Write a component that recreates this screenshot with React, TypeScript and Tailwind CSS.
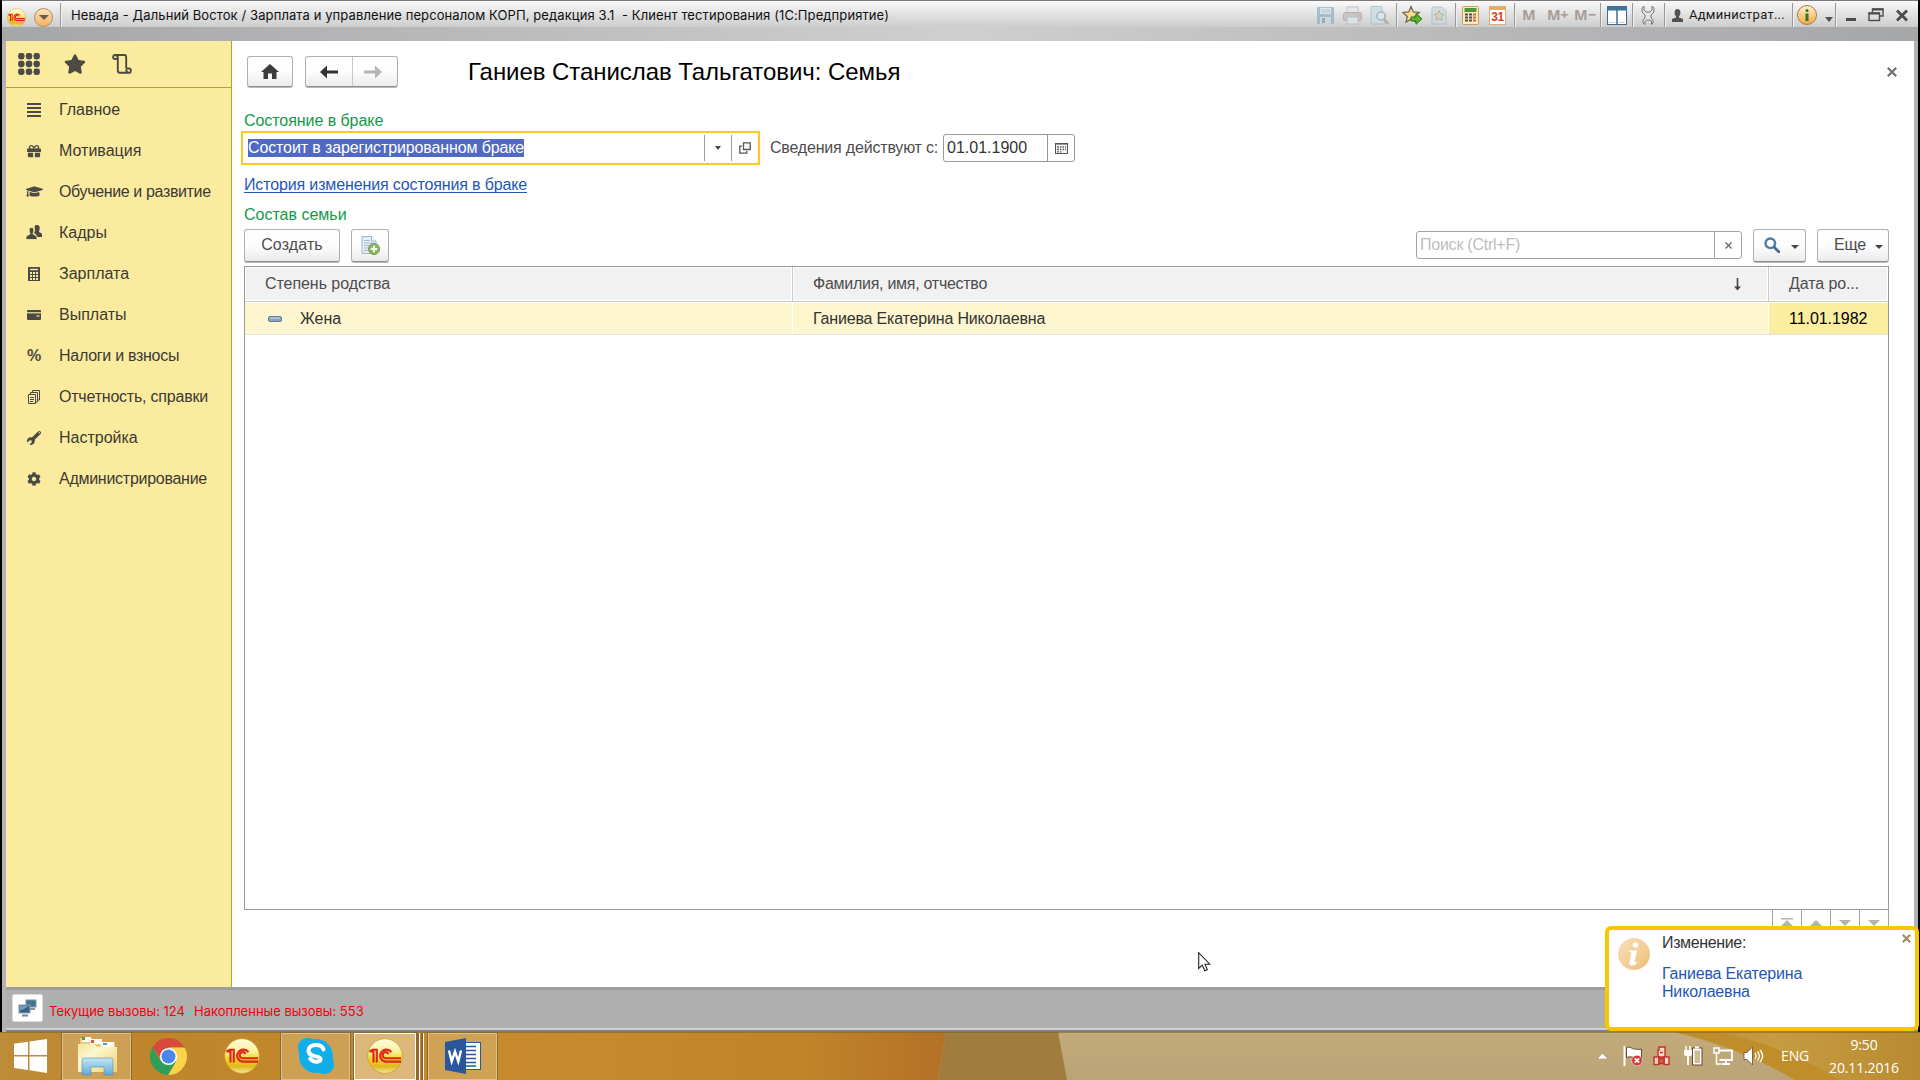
import type { ReactNode } from 'react';
import { FaStar, FaGift, FaGraduationCap, FaWrench, FaCog } from 'react-icons/fa';

const dark = '#4b4a45';

function Logo1C({ size, id }: { size: number; id: string }) {
  return (
    <svg width={size} height={size} viewBox="0 0 36 36">
      <defs>
        <linearGradient id={id} x1="0" y1="0" x2="0" y2="1">
          <stop offset="0" stopColor="#fffbe0" />
          <stop offset="0.35" stopColor="#fdf3a0" />
          <stop offset="0.6" stopColor="#f3d322" />
          <stop offset="0.8" stopColor="#e0b820" />
          <stop offset="1" stopColor="#f6e9a0" />
        </linearGradient>
      </defs>
      <circle cx="18" cy="18" r="17.3" fill={`url(#${id})`} stroke="#caa02c" strokeWidth="0.8" />
      <g fill="none" stroke="#e0251b" strokeWidth="2.1">
        <path d="M2.5 13.5 H6.5 V24.5 M5 11.8 H9.8 V24.5 M2.5 13.5 L5 11.8" />
        <path d="M24.5 14.2 A6.2 6 0 1 0 18.5 23.6 H34" />
        <path d="M21.5 16 A3 3 0 1 0 18.6 20.2 H34" />
      </g>
    </svg>
  );
}

function Sep() {
  return <div className="h-6 w-px shrink-0 self-start bg-[#9a9a9b] shadow-[1px_0_0_#efefef]" />;
}

function TitleIcons() {
  return (
    <div className="flex h-6 items-center">
      <div className="flex w-[84px] items-center gap-2 pl-1">
        <svg width="19" height="19" viewBox="0 0 19 19" opacity="0.75">
          <rect x="1" y="1" width="17" height="17" rx="1" fill="#8fb2c8" />
          <rect x="4" y="2" width="11" height="6" fill="#dbe5ea" />
          <path d="M5 4h9M5 6h9" stroke="#9ab9cb" />
          <rect x="4" y="11" width="11" height="7" fill="#c9d8e0" />
          <rect x="6" y="12" width="3" height="5" fill="#7c9fb6" />
        </svg>
        <svg width="19" height="19" viewBox="0 0 19 19" opacity="0.75">
          <rect x="4" y="1" width="11" height="7" fill="#e4e8ea" stroke="#a9b7bf" />
          <rect x="0.5" y="6.5" width="18" height="8" rx="2" fill="#c3bcb8" stroke="#a59c98" />
          <rect x="4" y="11" width="11" height="7" fill="#dde6ea" stroke="#a9b7bf" />
          <circle cx="15.5" cy="9" r="1" fill="#d29a7c" />
        </svg>
        <svg width="19" height="19" viewBox="0 0 19 19" opacity="0.75">
          <path d="M1 .5h11v5l3 2V18H1z" fill="#c9dbe5" stroke="#9ebccd" />
          <circle cx="11" cy="10" r="4" fill="#dbe8ef" stroke="#8ba9bb" strokeWidth="1.5" />
          <path d="M14 13l4 5" stroke="#b19a88" strokeWidth="2.5" />
        </svg>
      </div>
      <Sep />
      <div className="flex w-[58px] items-center gap-2 pl-[5px]">
        <svg width="21" height="21" viewBox="0 0 21 21">
          <path d="M9 1.5l2.3 5.4 6 .6-4.500 4 1.300 5.800L9 14.300l-5 3 1.300-5.800-4.500-4 6-.6z" fill="#fbd98b" stroke="#6e6447" strokeWidth="1.200" />
          <path d="M9 12h5V8.500l6 5.300-6 5.500V16H9z" fill="#5cb531" stroke="#2e7a1c" />
        </svg>
        <svg width="16" height="19" viewBox="0 0 16 19" opacity="0.7">
          <path d="M1 1h10l4 4v13H1z" fill="#ccd9e0" stroke="#9fb9c8" />
          <path d="M8 4.500l1.500 3.500 3.500.3-2.700 2.400.8 3.600L8 12.400l-3.100 1.900.8-3.600L3 8.300 6.500 8z" fill="#dccfae" stroke="#a39a84" />
        </svg>
      </div>
      <Sep />
      <div className="flex w-[58px] items-center gap-2.5 pl-1.5">
        <svg width="17" height="19" viewBox="0 0 17 19">
          <rect x="0.5" y="0.5" width="16" height="18" rx="1" fill="#fbeabf" stroke="#c79f5e" />
          <rect x="2.500" y="2" width="12" height="4" fill="#4c9636" />
          <path d="M3 8.500h3M7 8.500h3M3 11.500h3M7 11.500h3M3 14.500h3M7 14.500h3" stroke="#4f4b45" strokeWidth="2" />
          <path d="M11 8.500h3M11 11.500h3M11 14.500h3" stroke="#d8623a" strokeWidth="2" />
        </svg>
        <div className="flex h-[19px] w-[17px] flex-col border border-[#dcae7c] bg-white">
          <div className="h-1 bg-[#f1a867]" />
          <span className="text-center font-['Liberation_Sans'] text-[12px] leading-[14px] font-bold tracking-[-0.5px] text-[#dc3c1f]">31</span>
        </div>
      </div>
      <Sep />
      <div className="flex w-[85px] items-center pl-[7px] font-['Open_Sans'] text-[14.500px] leading-5 font-bold text-[#a89c95]">
        <span className="w-[25px]">M</span>
        <span className="w-[27px] tracking-[-0.5px]">M+</span>
        <span>M−</span>
      </div>
      <Sep />
      <div className="flex w-[31px] items-center pl-[6px]">
        <svg width="20" height="19" viewBox="0 0 20 19">
          <rect x="0.5" y="0.5" width="19" height="18" fill="#fff" stroke="#426c8e" />
          <rect x="1" y="1" width="18" height="3.500" fill="#3f739d" />
          <path d="M10 4v14" stroke="#426c8e" strokeWidth="1.500" />
          <path d="M2 16.500h6.500M11.500 16.500h6.500" stroke="#b9d3e4" />
        </svg>
      </div>
      <Sep />
      <div className="flex w-[31px] items-center pl-[8px]">
        <svg width="14" height="20" viewBox="0 0 14 20">
          <path d="M3 1v4l2 2h4l2-2V1l2 2v4l-3 3v3l2 2v3l-1.500 1.500V16L8.500 15h-3L4 16.500v3L2 18v-3l2-2v-3L1 7V3z" fill="#e3e3e3" stroke="#777" />
        </svg>
      </div>
      <Sep />
      <div className="flex w-[127px] items-center gap-1.5 pl-[7px]">
        <svg width="11" height="13" viewBox="0 0 11 13" fill="#55504e">
          <ellipse cx="5.500" cy="3.800" rx="2.900" ry="3.700" />
          <path d="M4 6h3v2.500l4 1.500v3H0v-3l4-1.500z" />
        </svg>
        <span className="font-['Roboto'] text-[13px] leading-5 tracking-[0.260px] text-[#1b1a19]">Администрат...</span>
      </div>
      <Sep />
      <div className="flex w-[42px] items-center gap-2 pl-1">
        <div className="flex h-5 w-5 items-center justify-center rounded-full border border-[#b07a33] bg-linear-to-b from-[#fff0cd] to-[#f3a93e]">
          <svg width="6" height="12" viewBox="0 0 6 12" fill="#31751f">
            <circle cx="3" cy="1.600" r="1.500" />
            <path d="M1.500 4.500h3V12h-3z" />
          </svg>
        </div>
        <svg width="8" height="5" viewBox="0 0 8 5" className="mt-2" fill="#55504e">
          <path d="M0 0h8L4 5z" />
        </svg>
      </div>
      <Sep />
      <div className="flex items-center pl-[10px] text-[#4b4949]">
        <svg width="10" height="14" viewBox="0 0 10 14" fill="#4d4b4b">
          <path d="M0 10h10v3H0z" />
        </svg>
        <svg width="16" height="14" viewBox="0 0 16 14" className="ml-3" fill="none" stroke="#4d4b4b">
          <path d="M4.500 4V1h10.500v7h-3" strokeWidth="1.400" />
          <path d="M4 1.500h11.500" strokeWidth="2" />
          <rect x="1" y="5" width="10.500" height="7.500" strokeWidth="1.400" />
          <path d="M.5 5.500h11.500" strokeWidth="2" />
        </svg>
        <svg width="12" height="13" viewBox="0 0 12 13" className="ml-3" stroke="#4d4b4b" strokeWidth="2.800">
          <path d="M1 1.500l10 10M11 1.500l-10 10" />
        </svg>
      </div>
    </div>
  );
}

function TitleBar() {
  return (
    <div className="flex h-[41px] flex-col border-t border-[#7d797b] bg-linear-to-r from-[#a5a6a8] via-[#cfcfcf] to-[#a5a6a8]">
      <div className="flex h-[26px] items-start bg-linear-to-b from-[#fafafa] via-[#e2e2e2] to-[#cccdce] pt-[2px]">
        <div className="flex h-6 w-[58px] items-center gap-[8px] pl-[5px] pt-1">
          <Logo1C size={19} id="lgTitle" />
          <div className="flex h-[19px] w-[19px] items-center justify-center rounded-full border border-[#b28a5e] bg-linear-to-b from-[#fde3bd] to-[#f0b25d]">
            <svg width="10" height="5" viewBox="0 0 10 5" fill="#6b5a45">
              <path d="M0 0h10L5 5z" />
            </svg>
          </div>
        </div>
        <Sep />
        <span className="ml-[10px] pt-[2px] font-['Inter'] text-[13px] leading-5 tracking-[0.1px] whitespace-pre text-[#101010]">
          {'Невада - Дальний Восток / Зарплата и управление персоналом КОРП, редакция 3.1  - Клиент тестирования (1С:Предприятие)'}
        </span>
        <div className="mr-[10px] ml-auto">
          <TitleIcons />
        </div>
      </div>
    </div>
  );
}

const menu: { label: string; track: string; icon: ReactNode }[] = [
  {
    label: 'Главное',
    track: '',
    icon: (
      <svg width="14" height="14" viewBox="0 0 14 14" stroke={dark} strokeWidth="2">
        <path d="M0 1h14M0 5h14M0 9h14M0 13h14" />
      </svg>
    ),
  },
  { label: 'Мотивация', track: '', icon: <FaGift size={14} /> },
  { label: 'Обучение и развитие', track: 'tracking-[-0.36px]', icon: <FaGraduationCap size={17} /> },
  {
    label: 'Кадры',
    track: '',
    icon: (
      <svg width="16" height="15" viewBox="0 0 16 15" fill={dark}>
        <path d="M8.500 1.500C9 .3 10 0 11 0c2 0 3 1.500 2.700 3.500-.2 1.600-.7 2.500-.7 3.500l3 1.500V12h-4.500l-2-3-1.500-1c.8-1 1.500-4 .5-6.500z" />
        <path d="M5.500 2.500C7.300 2.500 8 4 7.800 5.800 7.600 7.300 7 8 7 9l3.500 2c.5.500.5 1.500.5 3.500H0c0-2 0-3 .5-3.500L4 9c0-1-.6-1.700-.8-3.200C3 4 3.700 2.500 5.500 2.500z" stroke="#fbeb9e" strokeWidth="0.800" />
      </svg>
    ),
  },
  {
    label: 'Зарплата',
    track: '',
    icon: (
      <svg width="12" height="14" viewBox="0 0 12 14">
        <rect width="12" height="14" rx="0.500" fill={dark} />
        <path d="M2 2.500h8" stroke="#fbeb9e" strokeWidth="1.400" />
        <path d="M2 6h2M5 6h2M8 6h2M2 9h2M5 9h2M8 9h2M2 12h2M5 12h2M8 12h2" stroke="#fbeb9e" strokeWidth="2" />
      </svg>
    ),
  },
  {
    label: 'Выплаты',
    track: '',
    icon: (
      <svg width="14" height="10" viewBox="0 0 14 10">
        <rect width="14" height="10" rx="1" fill={dark} />
        <path d="M0 2.800h14" stroke="#fbeb9e" strokeWidth="1.200" />
        <path d="M9.500 6h3" stroke="#fbeb9e" strokeWidth="1.200" />
      </svg>
    ),
  },
  {
    label: 'Налоги и взносы',
    track: 'tracking-[-0.28px]',
    icon: <span className="font-['Liberation_Sans'] text-[16px] font-bold leading-5">%</span>,
  },
  {
    label: 'Отчетность, справки',
    track: 'tracking-[-0.21px]',
    icon: (
      <svg width="12" height="14" viewBox="0 0 12 14" fill="none" stroke={dark}>
        <path d="M.5 4.500h7v9h-7zM2.500 4.500v-2h7v9.500h-2M4.500 2.500v-2h7v9.500h-2M2 7.500h4M2 9.500h4M2 11.500h3" />
      </svg>
    ),
  },
  { label: 'Настройка', track: '', icon: <FaWrench size={14} className="-scale-x-100 -rotate-90" /> },
  { label: 'Администрирование', track: 'tracking-[-0.270px]', icon: <FaCog size={14} /> },
];

function Sidebar() {
  return (
    <div className="flex w-[226px] shrink-0 flex-col border-r border-[#b5a42b] bg-[#fbeb9e] text-[#4b4a45]">
      <div className="flex h-[47px] items-center border-b border-[#b5a42b] pl-3">
        <svg width="22" height="22" viewBox="0 0 22 22" fill={dark}>
          {[3.300, 11, 18.700].map((y) =>
            [3.300, 11, 18.700].map((x) => <rect key={`${x}-${y}`} x={x - 3.200} y={y - 3.200} width="6.400" height="6.400" rx="2.400" />),
          )}
        </svg>
        <FaStar size={22} className="ml-6" />
        <svg width="20" height="20" viewBox="0 0 20 20" className="ml-[26px]" fill="none" stroke={dark} strokeWidth="1.900">
          <path d="M2.500 5h3.300M3 1H12.500C14 1 14.200 2 14.200 3.500V14.500M5.800 4V16.500C5.800 18 6.500 18.800 8 18.800H17M3 1C.5 1 .5 5 3 5M5.800 4C5.800 2 5 1 3 1M14.200 14.500h3.300M17 18.800C19.500 18.800 19.500 14.500 17 14.500M17 18.800c-2 0-2.800-1.500-2.800-3.300" />
        </svg>
      </div>
      <div className="flex flex-col pt-px">
        {menu.map((m) => (
          <div key={m.label} className="flex h-[41px] items-center">
            <div className="flex w-[53px] justify-center pl-[3px]">{m.icon}</div>
            <span className={`text-[16px] leading-5 whitespace-nowrap text-[#3b3a35] ${m.track}`}>{m.label}</span>
          </div>
        ))}
      </div>
    </div>
  );
}

const btn = 'flex items-center rounded-[3px] border border-[#b0b0b0] border-b-[#8f8f8f] bg-linear-to-b from-white via-[#fdfdfd] to-[#ebebeb] shadow-[0_1px_0_#b8b8b8]';

function Caret() {
  return (
    <svg width="8" height="4" viewBox="0 0 8 4" fill="#444">
      <path d="M0 0h8L4 4z" />
    </svg>
  );
}

function ArrowIcon({ color, flip }: { color: string; flip?: boolean }) {
  return (
    <svg width="18" height="14" viewBox="0 0 18 14" fill={color} className={flip ? '-scale-x-100' : ''}>
      <path d="M0 7L7 0.500V5.400H18V8.600H7V13.500z" />
    </svg>
  );
}

function Main() {
  return (
    <div className="flex min-w-0 flex-1 flex-col bg-white pt-[15px] pl-3">
      <div className="flex h-[31px] items-center pl-[3px]">
        <div className={`${btn} h-[31px] w-[46px] justify-center`}>
          <svg width="18" height="15" viewBox="0 0 18 15" fill="#3c3c3c">
            <path d="M9 0L18 8H15.500V15H11V9.500H7V15H2.500V8H0L9 0z" />
          </svg>
        </div>
        <div className={`${btn} ml-3 h-[31px] w-[93px]`}>
          <div className="flex h-full w-[47px] items-center justify-center border-r border-[#c8c8c8]">
            <ArrowIcon color="#333" />
          </div>
          <div className="flex flex-1 justify-center pr-[5px]">
            <ArrowIcon color="#b4b4b4" flip />
          </div>
        </div>
        <h1 className="ml-[70px] text-[24px] leading-[30px] tracking-[-0.060px] whitespace-nowrap text-black">Ганиев Станислав Тальгатович: Семья</h1>
        <svg width="10" height="10" viewBox="0 0 10 10" className="mr-[17px] ml-auto" stroke="#6f6f6f" strokeWidth="2.200">
          <path d="M.8.8l8.400 8.400M9.200.8L.8 9.200" />
        </svg>
      </div>

      <div className="mt-6 h-5 text-[16px] leading-5 tracking-[-0.060px] text-[#129a48]">Состояние в браке</div>

      <div className="-ml-[3px] flex h-[34px] items-center">
        <div className="flex h-[34px] w-[519px] items-center border-2 border-[#fcc822] bg-white">
          <div className="flex-1 pl-[5px]">
            <span className="block h-[18px] w-[276px] bg-[#5069c5] text-[16px] leading-[18px] tracking-[-0.120px] whitespace-nowrap text-white">Состоит в зарегистрированном браке</span>
          </div>
          <div className="flex h-[26px] w-[27px] items-center justify-center border-l border-[#9c9c9c]">
            <svg width="6" height="4" viewBox="0 0 6 4" fill="#444">
              <path d="M0 0h6L3 4z" />
            </svg>
          </div>
          <div className="flex h-[26px] w-[27px] items-center justify-center border-l border-[#9c9c9c]">
            <svg width="12" height="12" viewBox="0 0 12 12" fill="none" stroke="#555" strokeWidth="1.300">
              <path d="M4.500.8h6.700v6.700H4.500zM3 4.200H.8v7h7V9" />
            </svg>
          </div>
        </div>
        <span className="ml-[10px] w-[173px] text-[16px] leading-5 tracking-[-0.190px] whitespace-nowrap text-[#4d4d4d]">Сведения действуют с:</span>
        <div className="flex h-7 w-[132px] items-center rounded-[3px] border border-[#999] bg-white">
          <span className="flex-1 pl-[3px] text-[16px] leading-5 text-[#333]">01.01.1900</span>
          <div className="flex h-full w-[27px] items-center justify-center border-l border-[#999]">
            <svg width="13" height="11" viewBox="0 0 13 11">
              <rect x="0.500" y="0.500" width="12" height="10" fill="#f5f5f5" stroke="#555" />
              <path d="M1 1.500h11" stroke="#999" />
              <path d="M2 4h2M5 4h1.500M7.500 4h1.500M10 4h1M2 6.500h2M5 6.500h1.500M7.500 6.500h1.500M10 6.500h1M2 8.800h2M5 8.800h1.500" stroke="#666" strokeWidth="1.300" />
            </svg>
          </div>
        </div>
      </div>

      <div className="mt-[10px] flex h-5">
        <a className="h-[18px] border-b border-[#1f5bb5] text-[16px] leading-5 tracking-[-0.140px] whitespace-nowrap text-[#1f57b5]">История изменения состояния в браке</a>
      </div>
      <div className="mt-[10px] h-5 text-[16px] leading-5 text-[#129a48]">Состав семьи</div>

      <div className="mt-[3px] flex h-[34px] items-center pr-[25px]">
        <div className={`${btn} h-[33px] w-24 justify-center text-[16px] tracking-[0.120px] text-[#4d4d4d]`}>Создать</div>
        <div className={`${btn} ml-[11px] h-[33px] w-[38px] justify-center`}>
          <svg width="19" height="19" viewBox="0 0 19 19">
            <path d="M1 .5h9.500L15 5v12.500H1z" fill="#e6eff5" stroke="#9cb6c8" />
            <path d="M10.500.5V5H15" fill="#fff" stroke="#9cb6c8" />
            <path d="M3 4.500h6M3 7h9M3 9.500h6M3 12h4M3 14.500h4" stroke="#a5bccb" />
            <circle cx="13" cy="13" r="5.500" fill="#8bb863" stroke="#6c9a4e" />
            <path d="M13 9.800v6.400M9.800 13h6.400" stroke="#fff" strokeWidth="2" />
          </svg>
        </div>
        <div className="ml-auto flex h-7 w-[326px] items-center rounded-[3px] border border-[#a3a3a3] bg-white">
          <span className="flex-1 pl-[3px] text-[16px] leading-5 tracking-[-0.240px] text-[#bdbdbd]">Поиск (Ctrl+F)</span>
          <div className="flex h-full w-[27px] items-center justify-center border-l border-[#a3a3a3]">
            <svg width="7" height="7" viewBox="0 0 7 7" stroke="#666" strokeWidth="1.300">
              <path d="M.5.5l6 6M6.500.5l-6 6" />
            </svg>
          </div>
        </div>
        <div className={`${btn} ml-[11px] h-[33px] w-[53px] gap-[11px] pl-[10px]`}>
          <svg width="16" height="16" viewBox="0 0 16 16" fill="none">
            <circle cx="6.300" cy="6.300" r="4.800" stroke="#547da5" strokeWidth="2.400" />
            <path d="M10 10l5 5" stroke="#456b92" strokeWidth="2.800" strokeLinecap="round" />
          </svg>
          <span className="pt-1"><Caret /></span>
        </div>
        <div className={`${btn} ml-[11px] h-[33px] w-[72px] gap-[9px] pl-4 text-[16px] tracking-[-0.200px] text-[#4d4d4d]`}>
          <span className="leading-5">Еще</span>
          <span className="pt-1"><Caret /></span>
        </div>
      </div>

      <div className="mt-1 mr-[25px] flex h-[644px] shrink-0 flex-col border border-[#999] bg-white">
        <div className="flex h-[35px] border-b border-[#c9c9c9] text-[16px] leading-5 text-[#4d4d4d]">
          <div className="flex w-[548px] border-r border-[#c9c9c9] p-px">
            <div className="flex flex-1 items-center bg-[#f1f1f1] pl-[19px] tracking-[-0.060px]">Степень родства</div>
          </div>
          <div className="flex w-[976px] border-r border-[#c9c9c9] p-px">
            <div className="flex flex-1 items-center justify-between bg-[#f1f1f1] pr-[26px] pl-[19px] tracking-[-0.270px]">
              Фамилия, имя, отчество
              <svg width="7" height="13" viewBox="0 0 7 13" fill="#444">
                <path d="M2.700 0h1.600v8.500H7L3.500 12.500 0 8.500h2.700z" />
              </svg>
            </div>
          </div>
          <div className="flex flex-1 p-px">
            <div className="flex flex-1 items-center bg-[#f1f1f1] pl-[19px] tracking-[-0.100px]">Дата ро...</div>
          </div>
        </div>
        <div className="flex h-[33px] border-y border-t-white border-b-[#e3e3e3] bg-[#fdf6cf] text-[16px] leading-5 text-[#333]">
          <div className="flex w-[548px] items-center border-r border-white pl-[23px]">
            <svg width="14" height="6" viewBox="0 0 14 6">
              <rect x="0.500" y="0.500" width="13" height="5" rx="1.500" fill="#86a5bb" stroke="#5d7f98" />
              <path d="M2 2h10" stroke="#c9dbe6" />
            </svg>
            <span className="ml-[18px]">Жена</span>
          </div>
          <div className="flex w-[976px] items-center border-r border-white pl-5 tracking-[-0.180px]">Ганиева Екатерина Николаевна</div>
          <div className="flex flex-1 items-center bg-[#fceea0] pl-[20px] tracking-[-0.050px] text-black">11.01.1982</div>
        </div>
      </div>
      <div className="mr-[25px] flex h-7 justify-end">
        {[
          'M0 0h12v1.500H0zM6 2L12 8H0z',
          'M6 2L12 8H0z',
          'M0 2h12L6 8z',
          'M0 2h12L6 8z',
        ].map((d, i) => (
          <div key={i} className="flex w-[29px] justify-center border-l border-[#a3a3a3] pt-[8px] last:w-[30px] last:border-r">
            <svg width="12" height="9" viewBox="0 0 12 9" fill="#b3b3b3">
              <path d={d} />
            </svg>
          </div>
        ))}
      </div>
    </div>
  );
}

function StatusBar() {
  return (
    <div className="flex h-[45px] flex-col border-t-[3px] border-[#9d9d9d] bg-[#afafaf]">
      <div className="flex h-[38px] items-start pt-1 pl-[6px]">
        <div className="flex h-7 w-[31px] items-center justify-center rounded-[2px] border border-[#dcdcdc] bg-white">
          <svg width="19" height="18" viewBox="0 0 19 18">
            <rect x="8" y="1" width="10" height="7" fill="#3f7297" stroke="#8c9194" />
            <path d="M11 10h6" stroke="#8c9194" strokeWidth="2" />
            <rect x="1" y="6" width="11" height="8" fill="#2f6288" stroke="#9aa0a4" />
            <path d="M2 7l9 0-9 5z" fill="#6f9dbb" />
            <path d="M4 16.500h6" stroke="#7d8387" strokeWidth="2" />
          </svg>
        </div>
        <div className="ml-[6px] flex gap-[9px] pt-[7px] font-['Inter'] text-[13px] leading-5 whitespace-nowrap text-[#f5000c]">
          <span>Текущие вызовы: 124</span>
          <span>Накопленные вызовы: 553</span>
        </div>
      </div>
      <div className="h-[2px] bg-[#cfd0d2]" />
      <div className="h-[2px] bg-[#7d8080]" />
    </div>
  );
}

function Wallpaper() {
  return (
    <svg width="1920" height="48" viewBox="0 0 1920 48" className="absolute inset-0" preserveAspectRatio="none">
      <defs>
        <linearGradient id="wpL" x1="0" y1="0" x2="1" y2="0">
          <stop offset="0" stopColor="#bd8c38" />
          <stop offset="0.150" stopColor="#bf852b" />
          <stop offset="0.600" stopColor="#c58b2c" />
          <stop offset="0.850" stopColor="#c08429" />
          <stop offset="1" stopColor="#b57028" />
        </linearGradient>
        <linearGradient id="wpT" x1="0" y1="0" x2="0" y2="1">
          <stop offset="0" stopColor="#c3ab7a" />
          <stop offset="1" stopColor="#baa376" />
        </linearGradient>
        <linearGradient id="wpR" x1="0" y1="0" x2="1" y2="0">
          <stop offset="0" stopColor="#b98e35" />
          <stop offset="0.400" stopColor="#c79c40" />
          <stop offset="1" stopColor="#b98b31" />
        </linearGradient>
      </defs>
      <rect width="1920" height="48" fill="url(#wpT)" />
      <path d="M0 0H946L938 48H0z" fill="url(#wpL)" />
      <path d="M946 0H1058L1067 48H938z" fill="#a07d3c" />
      <path d="M1674 0H1920V48H1795C1765 30 1720 10 1674 0z" fill="url(#wpR)" />
      <path d="M1674 0C1720 10 1765 30 1795 48H1840C1800 24 1760 8 1715 0z" fill="#bf8e2a" />
      <path d="M0 .5H1920" stroke="#7a6334" strokeOpacity="0.600" />
    </svg>
  );
}

const task = 'flex h-[47px] items-center justify-center border border-[#dcc08e] bg-[#e8cf9f]/35 shadow-[0_0_0_1px_#8a6a30]';

function Taskbar() {
  return (
    <div className="relative h-12 overflow-hidden">
      <Wallpaper />
      <div className="relative flex h-12 items-center">
        <svg width="33" height="34" viewBox="0 0 33 34" className="ml-[14px]" fill="#fff">
          <path d="M0 4.800L14 2.800V16H0zM15.500 2.500L33 0V16H15.500zM0 17.500H14V31L0 29zM15.500 17.500H33V34L15.500 31.300z" />
        </svg>
        <div className={`${task} ml-[15px] w-[69px]`}>
          <svg width="40" height="40" viewBox="0 0 40 40">
            <defs>
              <linearGradient id="fold" x1="0" y1="0" x2="1" y2="1">
                <stop offset="0" stopColor="#f3e3a0" />
                <stop offset="0.350" stopColor="#fdf8cf" />
                <stop offset="1" stopColor="#edd36c" />
              </linearGradient>
              <linearGradient id="tray" x1="0" y1="0" x2="0" y2="1">
                <stop offset="0" stopColor="#c5e6f5" />
                <stop offset="1" stopColor="#5fa9d8" />
              </linearGradient>
            </defs>
            <path d="M3 2h12l2 4H38v30H3z" fill="#e6cd78" />
            <path d="M5 1h9v5H5zM13 3h12v5H13zM24 6h13v5H24z" fill="#fbfbf4" />
            <path d="M5 1h3v3H5z" fill="#4ea24a" />
            <path d="M14 4h3v3h-3z" fill="#e2532e" />
            <path d="M26 7h4v2h-4z" fill="#4a9ad4" />
            <path d="M1 8h16l3 3h20v25H1z" fill="url(#fold)" />
            <path d="M5 24q0-2 2-2h27q2 0 2 2v15H27v-8H14v8H5z" fill="url(#tray)" stroke="#4d8fb8" strokeWidth="0.600" />
          </svg>
        </div>
        <svg width="37" height="37" viewBox="0 0 37 37" className="ml-[19px]">
          <path d="M18.500 18.500L2.500 9.300A18.500 18.500 0 0 1 34.600 9.500H18.500z" fill="#d9493c" />
          <path d="M18.500 9.500H34.600A18.500 18.500 0 0 1 18 37L26.300 23z" fill="#fbd34b" />
          <path d="M2.500 9.300A18.500 18.500 0 0 0 18 37L26 23.500 10.500 23z" fill="#2e9f58" />
          <path d="M18.500 10l-9 8.500L2.500 9.300z" fill="#d9493c" />
          <circle cx="18.500" cy="18.500" r="8.600" fill="#fff" />
          <circle cx="18.500" cy="18.500" r="7" fill="#4a86ec" />
        </svg>
        <div className="ml-[37px]"><Logo1C size={36} id="lgTask1" /></div>
        <div className={`${task} ml-[21px] w-[69px]`}>
          <svg width="38" height="38" viewBox="0 0 38 38">
            <path d="M11 1C5 1 1 5 1 11c0 2 .5 3.500 1.300 5C2 17 2 18 2 19c0 9.500 7.500 17 17 17 1 0 2 0 3-.3 1.500.8 3 1.300 5 1.300 6 0 10-4 10-10 0-2-.5-3.500-1.300-5 .3-1 .3-2 .3-3C36 9.500 28.500 2 19 2c-1 0-2 0-3 .3C14.500 1.500 13 1 11 1z" fill="#12aeea" />
            <path d="M26.500 12.500c-1-3.500-4.500-4.500-7.500-4.500-4.500 0-7.500 2-7.500 5.500 0 7.500 12 4.500 12 8.500 0 2-2 2.800-4.300 2.800-3.500 0-4.500-2-6-3" fill="none" stroke="#fff" strokeWidth="4" strokeLinecap="round" />
          </svg>
        </div>
        <div className="ml-1 flex">
          <div className="flex h-[47px] w-[62px] items-center justify-center border border-white bg-[#f0dfc0]/55 shadow-[0_0_0_1px_#8a6a30]">
            <Logo1C size={36} id="lgTask2" />
          </div>
          <div className="ml-[1px] h-[47px] w-[3px] border-r border-white bg-[#8a6a30]" />
          <div className="ml-[1px] h-[47px] w-[3px] border-r border-white bg-[#8a6a30]" />
        </div>
        <div className={`${task} ml-1 w-[69px]`}>
          <svg width="36" height="36" viewBox="0 0 36 36">
            <rect x="20" y="4.500" width="15.500" height="27" fill="#fff" stroke="#2b579a" />
            <path d="M21 8.500h10M21 12.500h10M21 16.500h10M21 20.500h10M21 24.500h10M21 28h10" stroke="#2b579a" strokeWidth="1.600" />
            <path d="M0 4L21 0V36L0 32z" fill="#2b579a" />
            <path d="M4 12.500L6.700 23.500 10 13.500 13.300 23.500 16 12.500" fill="none" stroke="#fff" strokeWidth="2.400" />
          </svg>
        </div>

        <div className="ml-auto flex items-center">
          <svg width="11" height="6" viewBox="0 0 11 6" fill="#fff" stroke="#7b6a4d" strokeWidth="0.500">
            <path d="M0 6L5.500 0 11 6z" />
          </svg>
          <svg width="20" height="20" viewBox="0 0 20 20" className="ml-[15px]">
            <path d="M1.500 0v20" stroke="#fff" strokeWidth="2" />
            <path d="M3.500 1.500c4-1.500 5 1.500 8 1.500s3 1 7 0v9c-4 1-5-.5-7-.5s-4-1.500-8 0z" fill="#fff" stroke="#5e4d30" />
            <circle cx="14" cy="14.500" r="5.300" fill="#d7373b" stroke="#fff" strokeWidth="0.500" />
            <path d="M11.800 12.300l4.400 4.400M16.200 12.300l-4.400 4.400" stroke="#fff" strokeWidth="1.800" />
          </svg>
          <svg width="17" height="20" viewBox="0 0 17 20" className="ml-[10px]" fill="#f9d5ca" stroke="#c23227" strokeWidth="1.400">
            <path d="M6 1h6v10H5V4h1z" />
            <path d="M7 6.500h3" />
            <rect x="1" y="11" width="5" height="7.500" />
            <rect x="11" y="11" width="5" height="7.500" />
            <path d="M6 12.500h5v5H6z" fill="#e05a48" />
          </svg>
          <svg width="19" height="20" viewBox="0 0 19 20" className="ml-[14px]" fill="none" stroke="#fff">
            <path d="M2 0v4M6 0v4" strokeWidth="1.500" />
            <path d="M0 4h8v4c0 1-1 2-2 2H2C1 10 0 9 0 8z" fill="#fff" stroke="none" />
            <path d="M4 10v9" strokeWidth="1.800" />
            <rect x="8.500" y="2" width="9.500" height="17" stroke="#5e4d30" fill="#fff" />
            <rect x="10.500" y="4.500" width="5.500" height="12.500" fill="#cdbb95" stroke="none" />
            <path d="M11 1.500h4" strokeWidth="2" />
          </svg>
          <svg width="20" height="19" viewBox="0 0 20 19" className="ml-[10px]" fill="none" stroke="#fff" strokeWidth="1.800">
            <path d="M6 3.500h13v9.500H6.500" />
            <path d="M9 17h8M13 13v4" />
            <rect x="1" y="1" width="5" height="5" strokeWidth="1.500" />
            <path d="M3.500 6v11h5" strokeWidth="1.500" />
          </svg>
          <svg width="21" height="20" viewBox="0 0 21 20" className="ml-[10px]" fill="none" stroke="#fff">
            <path d="M1 6.500h3L9.500 1v18L4 13.500H1z" fill="#fff" stroke="#5e4d30" strokeWidth="0.800" />
            <path d="M12 7c1.500 2 1.500 4 0 6M14.500 5.500c2.500 3 2.500 6 0 9M17 4c3.500 4 3.500 8 0 12" strokeWidth="1.300" />
          </svg>
          <span className="ml-[17px] w-[28px] font-['Open_Sans'] text-[14px] leading-5 tracking-[-0.100px] text-white">ENG</span>
          <div className="ml-[10px] w-[90px] text-center font-['Open_Sans'] text-[14px] leading-[23px] tracking-[-0.150px] text-white">
            <div>9:50</div>
            <div>20.11.2016</div>
          </div>
        </div>
        <div className="w-[11px]" />
      </div>
    </div>
  );
}

function Notification() {
  return (
    <div className="absolute top-[926px] left-[1605px] flex h-[105px] w-[314px] rounded-[6px] border-4 border-[#fdc400] bg-white">
      <div className="mt-2 ml-[9px] flex h-8 w-8 items-center justify-center rounded-full bg-linear-to-br from-[#f8e0ba] to-[#efbd78]">
        <svg width="12" height="24" viewBox="0 0 12 24" fill="#fff">
          <circle cx="7.500" cy="3" r="2.700" />
          <path d="M1.500 8.500h6.500c.8 0 1 .5.800 1.300L6.800 18.500c-.3 1.500.3 2 2.700 1.500C8.500 22.500 6 23.500 4 23.500 1.800 23.500 1 22 1.500 19.800L3.300 11.500c.3-1.200-.3-1.500-2-1.500z" />
        </svg>
      </div>
      <div className="ml-3 flex-1 pt-[3px] text-[16px]">
        <div className="leading-5 tracking-[-0.360px] text-[#333]">Изменение:</div>
        <div className="mt-[12px] w-[160px] leading-[18px] tracking-[-0.180px] text-[#1f57b5]">
          Ганиева Екатерина Николаевна
        </div>
      </div>
      <svg width="9" height="9" viewBox="0 0 9 9" className="mt-1 mr-[4px]" stroke="#a58c62" strokeWidth="2.200">
        <path d="M.8.8l7.400 7.400M8.200.8L.8 8.200" />
      </svg>
    </div>
  );
}

export default function App() {
  return (
    <div className="relative flex h-[1080px] w-[1920px] flex-col overflow-hidden bg-black font-['Liberation_Sans',sans-serif]">
      <div className="mr-[2px] ml-[2px] flex h-[1032px] flex-col bg-[#b3b1b3]">
        <TitleBar />
        <div className="mr-1 ml-1 flex h-[946px]">
          <Sidebar />
          <Main />
        </div>
        <div className="pl-1"><StatusBar /></div>
      </div>
      <Taskbar />
      <Notification />
      <svg width="13" height="20" viewBox="0 0 13 20" className="absolute top-[952px] left-[1198px]">
        <path d="M.7.7V16.500L4.300 13.200 6.800 18.700 9.300 17.600 7 12.200H11.800z" fill="#fff" stroke="#222" strokeWidth="1.100" />
      </svg>
    </div>
  );
}
